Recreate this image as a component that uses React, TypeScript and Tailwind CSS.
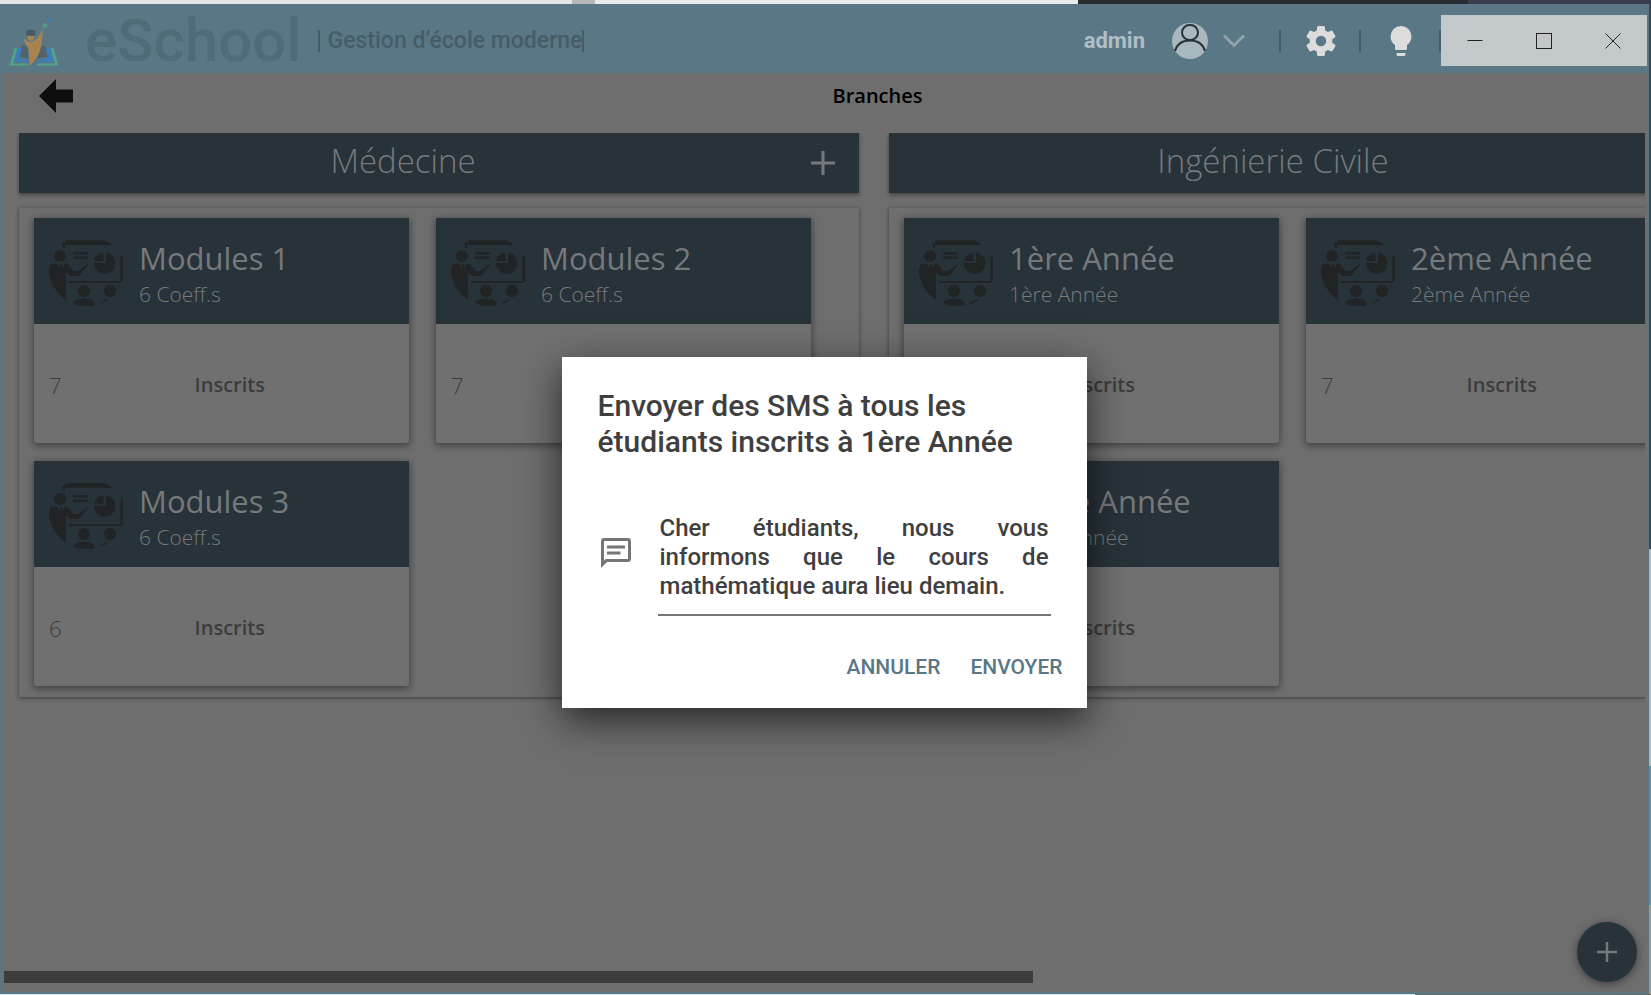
import React, { useState } from 'react';

interface Branch {
  title: string;
  subtitle: string;
  count: number;
}

interface Department {
  name: string;
  branches: Branch[];
}

const DEPARTMENTS: Department[] = [
  {
    name: 'Médecine',
    branches: [
      { title: 'Modules 1', subtitle: '6 Coeff.s', count: 7 },
      { title: 'Modules 2', subtitle: '6 Coeff.s', count: 7 },
      { title: 'Modules 3', subtitle: '6 Coeff.s', count: 6 },
    ],
  },
  {
    name: 'Ingénierie Civile',
    branches: [
      { title: '1ère Année', subtitle: '1ère Année', count: 7 },
      { title: '2ème Année', subtitle: '2ème Année', count: 7 },
      { title: '3ème Année', subtitle: '3ème Année', count: 6 },
    ],
  },
];

function Logo() {
  return (
    <svg viewBox="0 0 50 52" className="h-[52px] w-[50px] shrink-0" aria-hidden="true">
      <path d="M5.500 33H9L4 48.500H20V50.500H0.500Z" fill="#52a384" />
      <path d="M44.500 33H41L46 48.500H28V50.500H49.500Z" fill="#52a384" />
      <path d="M8.500 33H14L11 43Q17 43 21 49Q12 45.500 4.500 47.500Z" fill="#3e7db5" />
      <path d="M41.500 33H36L39 43Q32 43 27 49Q38 45.500 45.500 47.500Z" fill="#3e7db5" />
      <path d="M13 30Q17 30 19 35V44Q15 42 11 42Z" fill="#52636c" />
      <path d="M36 30Q32 31 30.500 34L28 44Q33 42 38.500 42Z" fill="#52636c" />
      <path d="M14 22.500Q18 27 22 27Q29 26 33.500 13.500Q34 33 28 42Q25 47 21 50.500Q20 45 20 39Q20 32 16 28Z" fill="#a9834f" />
      <path d="M18 21H25.500Q25 26 21.500 26Q18.500 25 18 21Z" fill="#a9834f" />
      <path d="M17 16Q21.500 13.500 26.500 16L26 20.500H17.500Z" fill="#495962" />
      <path d="M36 7L37 9.500H39.500L37.500 11L38.500 13.500L36 12L33.500 13.500L34.500 11L32.500 9.500H35Z" fill="#52a384" />
      <path d="M40 2.500L40.800 4.500H43L41.200 5.700L42 8L40 6.700L38 8L38.700 5.700L37 4.500H39.300Z" fill="#3e7db5" />
      <path d="M37 0L38.500 1L37.500 2Z" fill="#495962" />
    </svg>
  );
}

function ClassroomIcon() {
  return (
    <svg viewBox="0 0 74 66" className="h-[66px] w-[74px] shrink-0" fill="#222324" aria-hidden="true">
      <path d="M12 5Q16 0 21 0H54Q59 1 63 5H16V8H14V5Z" />
      <circle cx="11" cy="16" r="6" />
      <path d="M24 12H38.500V14.500H24ZM24 16.500H38.500V19H24Z" />
      <path d="M57 12.500V23H45A10.800 10.800 0 1 0 57 12.500Z" />
      <path d="M54.500 12.500V21H45.500Q46 14 54.500 12.500Z" />
      <path d="M2 24L8 23.500L10.500 29L11 24H12.500L13 29L15.500 23.500L19 24L24 31H29L40 23L32 34L30 36H21L17 32V60Q4 51 0.500 36Q-1 28 2 24Z" />
      <path d="M71.500 16Q74 15 74 20V39Q74 43 70 43H20V41H71.500Z" />
      <circle cx="35" cy="51" r="6" />
      <circle cx="61" cy="51" r="6" />
      <path d="M24 63Q27 59 31 59H40Q45 60 46 65L43 66H35Q29 66 24 63Z" />
      <path d="M50.500 64Q53 60 60 59Q56 63 50.500 64Z" />
    </svg>
  );
}

function Separator() {
  return <span className="h-[22px] w-[2px] shrink-0 bg-[#465d68]" />;
}

function TitleBar() {
  return (
    <header className="flex h-[69px] shrink-0 items-center bg-[#5a7785] pt-1 pl-2 font-['Roboto',sans-serif]">
      <Logo />
      <h1 className="ml-[26px] text-[60px] leading-[65px] font-medium text-[#506c79]">eSchool</h1>
      <p className="ml-4 flex items-center text-[23px] font-medium whitespace-nowrap text-[#465d68]">
        <Separator />
        <span className="ml-2 leading-7">Gestion d’école moderne</span>
        <Separator />
      </p>
      <div className="ml-auto flex h-full shrink-0 items-center">
        <button type="button" className="flex items-center text-[#b0bec5]">
          <span className="text-[22px] leading-7 font-bold">admin</span>
          <svg viewBox="0 0 36 36" className="ml-[27px] size-9" fill="none" aria-hidden="true">
            <circle cx="18" cy="18" r="18" fill="#a9b7be" />
            <rect x="10" y="2" width="16" height="15" rx="7.500" stroke="#263238" strokeWidth="2" />
            <path d="M3 28Q6 17.500 18 17.500Q30 17.500 33 28" stroke="#263238" strokeWidth="2" />
          </svg>
          <svg viewBox="0 0 22 14" className="ml-[15px] h-[14px] w-[22px]" fill="none" aria-hidden="true">
            <path d="M1 1.500L11 11.500L21 1.500" stroke="#94a3ab" strokeWidth="3" />
          </svg>
        </button>
        <span className="ml-[34px] flex">
          <Separator />
        </span>
        <button type="button" aria-label="Paramètres" className="mr-5 ml-[22px] text-[#dcdcdc]">
          <svg viewBox="0 0 24 24" className="size-9" fill="currentColor" aria-hidden="true">
            <path d="M12 15.500A3.500 3.500 0 0 1 8.500 12 3.500 3.500 0 0 1 12 8.500a3.500 3.500 0 0 1 3.500 3.500 3.500 3.500 0 0 1-3.500 3.500m7.430-2.530c.04-.32.07-.64.07-.97s-.03-.66-.07-1l2.110-1.630c.19-.15.24-.42.12-.64l-2-3.460c-.12-.22-.39-.31-.61-.22l-2.490 1c-.52-.39-1.060-.73-1.690-.98l-.37-2.650A.506.506 0 0 0 14 2h-4c-.25 0-.46.18-.5.42l-.37 2.650c-.63.25-1.170.59-1.690.98l-2.490-1c-.22-.09-.49 0-.61.22l-2 3.460c-.13.22-.07.49.12.64L4.570 11c-.04.34-.07.67-.07 1s.03.65.07.97l-2.110 1.660c-.19.15-.25.42-.12.64l2 3.460c.12.22.39.3.61.22l2.490-1.010c.52.4 1.060.74 1.690.99l.37 2.650c.04.24.25.42.5.42h4c.25 0 .46-.18.5-.42l.37-2.650c.63-.26 1.170-.59 1.690-.99l2.490 1.010c.22.08.49 0 .61-.22l2-3.460c.12-.22.07-.49-.12-.64z" />
          </svg>
        </button>
        <Separator />
        <button type="button" aria-label="Thème" className="mr-5 ml-[22px] text-[#dcdcdc]">
          <svg viewBox="0 0 24 24" className="size-9" fill="currentColor" aria-hidden="true">
            <path d="M12 2a7 7 0 0 0-7 7c0 2.380 1.190 4.470 3 5.740V17a1 1 0 0 0 1 1h6a1 1 0 0 0 1-1v-2.260c1.810-1.270 3-3.360 3-5.740a7 7 0 0 0-7-7M9 21a1 1 0 0 0 1 1h4a1 1 0 0 0 1-1v-1H9z" />
          </svg>
        </button>
        <Separator />
        <WindowControls />
      </div>
    </header>
  );
}

function WindowControls() {
  return (
    <div className="flex h-[51px] w-[206px] bg-[#c3c8cb] text-[#222]">
      <button type="button" aria-label="Réduire" className="flex flex-1 items-center justify-center">
        <svg viewBox="0 0 16 16" className="size-4" stroke="currentColor" aria-hidden="true">
          <path d="M0.500 7.500H15.500" />
        </svg>
      </button>
      <button type="button" aria-label="Agrandir" className="flex flex-1 items-center justify-center">
        <svg viewBox="0 0 16 16" className="size-4" stroke="currentColor" fill="none" aria-hidden="true">
          <rect x="0.500" y="0.500" width="15" height="15" />
        </svg>
      </button>
      <button type="button" aria-label="Fermer" className="flex flex-1 items-center justify-center">
        <svg viewBox="0 0 16 16" className="size-4" stroke="currentColor" aria-hidden="true">
          <path d="M0.500 0.500L15.500 15.500M15.500 0.500L0.500 15.500" />
        </svg>
      </button>
    </div>
  );
}

function PlusIcon({ className }: { className: string }) {
  return (
    <svg viewBox="0 0 24 24" className={className} stroke="currentColor" strokeWidth="3" aria-hidden="true">
      <path d="M12 0V24M0 12H24" />
    </svg>
  );
}

function BranchCard({ branch }: { branch: Branch }) {
  return (
    <article className="overflow-hidden rounded-b-[3px] bg-[#707070] shadow-[0_2px_7px_1px_rgba(0,0,0,0.4)]">
      <div className="flex h-[106px] items-center gap-4 bg-[#283339] px-[15px] pt-1">
        <ClassroomIcon />
        <div className="pt-[2px] whitespace-nowrap text-[#76797b]">
          <h3 className="text-[31px] leading-10">{branch.title}</h3>
          <p className="text-[21px] leading-8 font-light">{branch.subtitle}</p>
        </div>
      </div>
      <div className="flex h-[119px] items-center px-[15px] pt-[3px] text-[#3c3c3c]">
        <span className="mr-1 text-[22px] font-light">{branch.count}</span>
        <span className="flex-1 text-center text-[20px] font-semibold">Inscrits</span>
      </div>
    </article>
  );
}

function DepartmentColumn({ department }: { department: Department }) {
  return (
    <section className="w-[840px] shrink-0">
      <div className="flex h-[60px] items-center bg-[#283339] pr-6 text-[#76797b] shadow-[0_2px_4px_rgba(0,0,0,0.4)]">
        <h2 className="flex-1 pr-6 pb-1 text-center text-[33px] leading-10 font-light">{department.name}</h2>
        <button type="button" aria-label={`Ajouter dans ${department.name}`}>
          <PlusIcon className="size-6" />
        </button>
      </div>
      <div className="mt-[15px] grid grid-cols-[375px_375px] gap-x-[27px] gap-y-[18px] px-[15px] pt-[10px] pb-[11px] shadow-[0_1px_4px_rgba(0,0,0,0.45)]">
        {department.branches.map((branch) => (
          <BranchCard key={branch.title} branch={branch} />
        ))}
      </div>
    </section>
  );
}

function SmsDialog() {
  const [message, setMessage] = useState(
    'Cher étudiants, nous vous informons que le cours de mathématique aura lieu demain.'
  );

  return (
    <div
      role="dialog"
      aria-labelledby="sms-title"
      className="w-[525px] bg-white pt-[31px] pr-[15px] pb-4 pl-9 font-['Roboto',sans-serif] text-[#3f3f3f] shadow-[0_12px_36px_rgba(0,0,0,0.65)]"
    >
      <h2 id="sms-title" className="text-[30px] leading-9 font-medium">
        Envoyer des SMS à tous les étudiants inscrits à 1ère Année
      </h2>
      <div className="mt-[54px] flex items-start pr-[21px]">
        <svg viewBox="0 0 24 24" className="mt-[21px] size-9 shrink-0" fill="#757575" aria-hidden="true">
          <path d="M20 2H4a2 2 0 0 0-2 2v18l4-4h14a2 2 0 0 0 2-2V4a2 2 0 0 0-2-2m0 14H5.170L4 17.170V4h16zM6 7h12v2H6zm0 4h9v2H6z" />
        </svg>
        <textarea
          aria-label="Message"
          rows={3}
          value={message}
          onChange={(e) => setMessage(e.target.value)}
          className="ml-6 block h-[102px] flex-1 resize-none overflow-hidden border-b-2 border-[#757575] px-[2px] text-justify text-[24px] leading-[29px] font-medium outline-none"
        />
      </div>
      <div className="mt-7 flex justify-end text-[21px] font-medium text-[#5a7785]">
        <button type="button" className="h-12 px-[15px]">ANNULER</button>
        <button type="button" className="h-12 pr-[9px] pl-[15px]">ENVOYER</button>
      </div>
    </div>
  );
}

export default function App() {
  return (
    <div className="flex h-screen flex-col overflow-hidden bg-[#3b4450] font-['Open_Sans','Noto_Sans',sans-serif]">
      {/* Desktop edge above the window */}
      <div className="flex h-1 shrink-0">
        <span className="w-[572px] bg-[#e3e7e9]" />
        <span className="w-[23px] bg-[#b5b7b9]" />
        <span className="w-[483px] bg-[#e8ebec]" />
        <span className="w-[390px] bg-[#272c30]" />
        <span className="flex-1 bg-[#393d4c]" />
      </div>

      <div className="flex min-h-0 flex-1">
        <div className="flex min-w-0 flex-1 flex-col border-r-2 border-b-2 border-l border-[#5a7785] bg-[#6e6e6e]">
          <TitleBar />
          <main className="relative flex min-h-0 flex-1 flex-col">
            <div className="flex h-[60px] shrink-0 items-center pb-[14px]">
              <button type="button" aria-label="Retour" className="w-[107px] pl-[38px]">
                <svg viewBox="0 0 34 34" className="size-[34px]" fill="#0e0e0e" aria-hidden="true">
                  <path d="M0 17L17 0V10.500H34V23.500H17V34Z" />
                </svg>
              </button>
              <h2 className="flex-1 text-center text-[20px] font-semibold text-black">Branches</h2>
            </div>

            <div className="mr-[2px] flex flex-1 gap-[30px] overflow-hidden pl-[18px]">
              {DEPARTMENTS.map((department) => (
                <DepartmentColumn key={department.name} department={department} />
              ))}
            </div>

            <div className="mb-[9px] ml-[3px] h-3 w-5/8 shrink-0 bg-[#3c3c3c]" />

            <button
              type="button"
              aria-label="Ajouter une branche"
              className="absolute right-[10px] bottom-[10px] flex size-[60px] items-center justify-center rounded-full bg-[#283339] text-[#76797b] shadow-[0_2px_8px_rgba(0,0,0,0.45)]"
            >
              <PlusIcon className="size-5" />
            </button>

            <div className="absolute inset-0 flex items-center justify-center">
              <SmsDialog />
            </div>
          </main>
        </div>
        {/* Desktop edge to the right */}
        <div className="flex w-[2px] shrink-0 flex-col">
          <span className="h-[55%] bg-[#3b4450]" />
          <span className="h-[22%] bg-[#b3b8ba]" />
          <span className="h-[14%] bg-[#5f8f9a]" />
          <span className="flex-1 bg-[#a39788]" />
        </div>
      </div>
      <div className="flex h-px shrink-0">
        <span className="w-[1415px] bg-[#e3e7e9]" />
        <span className="flex-1 bg-[#6b6a5f]" />
      </div>
    </div>
  );
}
